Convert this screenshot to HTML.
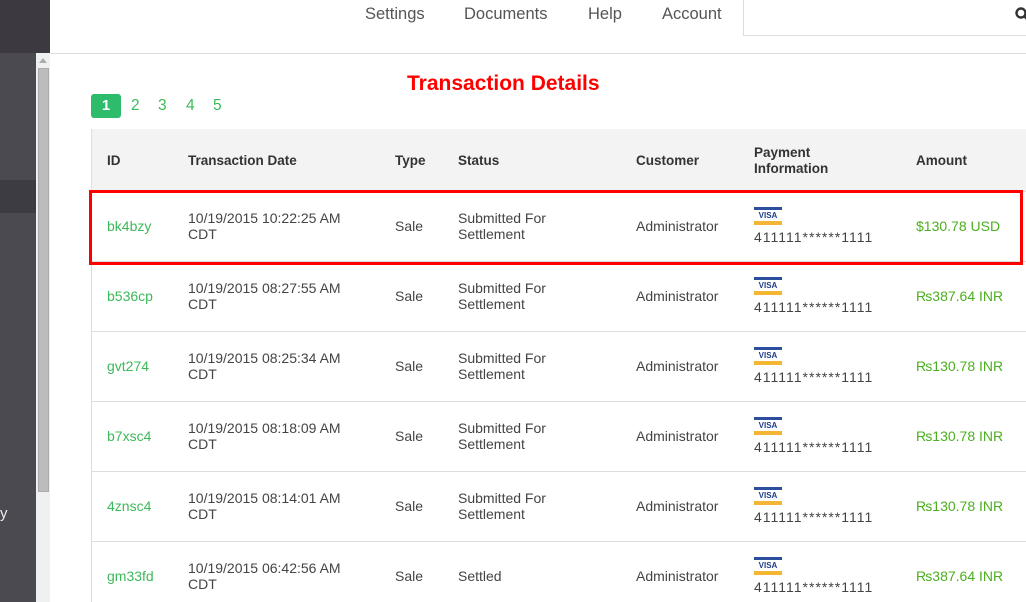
<!DOCTYPE html>
<html><head><style>
*{margin:0;padding:0;box-sizing:border-box}
body{width:1026px;height:602px;overflow:hidden;background:#fff;font-family:"Liberation Sans",sans-serif;position:relative;color:#444}
.a{position:absolute;white-space:nowrap}
.nav{font-size:16.5px;color:#555;top:5px}
.h{font-size:13.5px;font-weight:bold;color:#333}
.c{font-size:14px;color:#444;line-height:16px}
.g{color:#3cb95a}
.amt{color:#4caf1f;font-size:14px}
.visa{position:absolute;width:28px;height:18px;background:#fff}
.visa:before{content:"";position:absolute;left:0;top:0;width:28px;height:3px;background:#2a4f9e}
.visa:after{content:"";position:absolute;left:0;bottom:0;width:28px;height:4px;background:#f4b632}
.visa span{position:absolute;top:3px;left:0;width:28px;text-align:center;font-size:8px;font-weight:bold;color:#1f3f8a;line-height:11px}
.line{position:absolute;left:91px;width:935px;height:1px;background:#ddd}
</style></head><body>
<div class="a" style="left:0;top:0;width:50px;height:53px;background:#3c3a40"></div>
<div class="a" style="left:0;top:53px;width:36px;height:549px;background:#4b4a50"></div>
<div class="a" style="left:0;top:180px;width:36px;height:33px;background:#3d3c42"></div>
<div class="a" style="left:0;top:505px;color:#eee;font-size:15px">y</div>
<div class="a" style="left:36px;top:53px;width:14px;height:549px;background:#eff1f0"></div>
<div class="a" style="left:39px;top:58px;width:0;height:0;border-left:4px solid transparent;border-right:4px solid transparent;border-bottom:5px solid #aaa"></div>
<div class="a" style="left:38px;top:68px;width:11px;height:424px;background:#bcbcbc;border:1px solid #aaa"></div>
<div class="a" style="left:50px;top:53px;width:976px;height:1px;background:#ddd"></div>
<div class="a nav" style="left:365px">Settings</div>
<div class="a nav" style="left:464px">Documents</div>
<div class="a nav" style="left:588px">Help</div>
<div class="a nav" style="left:662px">Account</div>
<div class="a" style="left:743px;top:-1px;width:290px;height:37px;border:1px solid #ddd"></div>
<svg class="a" style="left:1014px;top:6px" width="14" height="16"><circle cx="7" cy="7" r="4.5" fill="none" stroke="#333" stroke-width="2.4"/><line x1="10" y1="10" x2="13" y2="13" stroke="#333" stroke-width="2.4"/></svg>
<div class="a" style="left:407px;top:72px;font-size:21px;font-weight:bold;color:#f00">Transaction Details</div>
<div class="a" style="left:91px;top:94px;width:30px;height:24px;background:#2dbb6c;border-radius:3px;color:#fff;font-weight:bold;font-size:15px;text-align:center;line-height:24px">1</div>
<div class="a g" style="left:131px;top:97px;font-size:15.5px">2</div>
<div class="a g" style="left:158px;top:97px;font-size:15.5px">3</div>
<div class="a g" style="left:186px;top:97px;font-size:15.5px">4</div>
<div class="a g" style="left:213px;top:97px;font-size:15.5px">5</div>
<div class="a" style="left:91px;top:129px;width:935px;height:62px;background:#f3f3f3"></div>
<div class="a" style="left:91px;top:129px;width:1px;height:473px;background:#ddd"></div>
<div class="a h" style="left:107px;top:153px">ID</div>
<div class="a h" style="left:188px;top:153px">Transaction Date</div>
<div class="a h" style="left:395px;top:153px">Type</div>
<div class="a h" style="left:458px;top:153px">Status</div>
<div class="a h" style="left:636px;top:153px">Customer</div>
<div class="a h" style="left:754px;top:145px;line-height:16px">Payment<br>Information</div>
<div class="a h" style="left:916px;top:153px">Amount</div>
<div class="line" style="top:191px"></div>
<div class="line" style="top:261px"></div>
<div class="line" style="top:331px"></div>
<div class="line" style="top:401px"></div>
<div class="line" style="top:471px"></div>
<div class="line" style="top:541px"></div>

<div id="rows"></div>
<div class="a" style="left:89px;top:190px;width:934px;height:75px;border:3px solid #f00"></div>
<script>
var d=[["bk4bzy","10:22:25 AM","Submitted For<br>Settlement","$130.78 USD"],
["b536cp","08:27:55 AM","Submitted For<br>Settlement","₨387.64 INR"],
["gvt274","08:25:34 AM","Submitted For<br>Settlement","₨130.78 INR"],
["b7xsc4","08:18:09 AM","Submitted For<br>Settlement","₨130.78 INR"],
["4znsc4","08:14:01 AM","Submitted For<br>Settlement","₨130.78 INR"],
["gm33fd","06:42:56 AM","Settled","₨387.64 INR"]];
var h="";
d.forEach(function(r,i){var y=191+i*70;var mid=y+27;
var st=r[2].indexOf("<br>")>0?y+19:mid;
h+='<div class="a c g" style="left:107px;top:'+mid+'px">'+r[0]+'</div>'+
'<div class="a c" style="left:188px;top:'+(y+19)+'px">10/19/2015 '+r[1]+'<br>CDT</div>'+
'<div class="a c" style="left:395px;top:'+mid+'px">Sale</div>'+
'<div class="a c" style="left:458px;top:'+st+'px">'+r[2]+'</div>'+
'<div class="a c" style="left:636px;top:'+mid+'px">Administrator</div>'+
'<div class="visa" style="left:754px;top:'+(y+16)+'px"><span>VISA</span></div>'+
'<div class="a c" style="left:754px;top:'+(y+38)+'px;letter-spacing:1px">411111******1111</div>'+
'<div class="a amt" style="left:916px;top:'+mid+'px">'+r[3]+'</div>';});
document.getElementById("rows").innerHTML=h;
</script>
</body></html>
